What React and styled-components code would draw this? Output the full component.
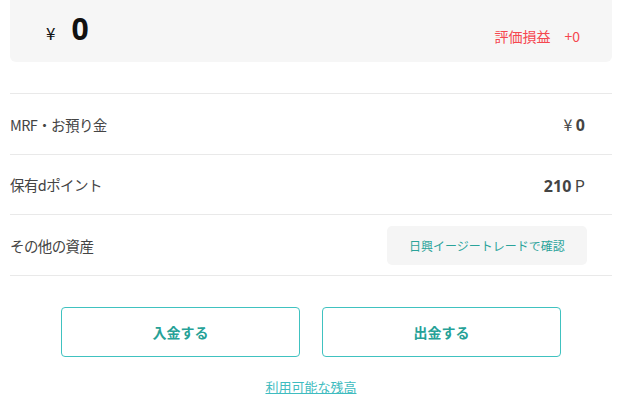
import React from 'react';
import styled, { createGlobalStyle } from 'styled-components';

const GlobalStyle = createGlobalStyle`
    body {
        margin: 0;
        background: #ffffff;
        font-family: "Noto Sans CJK JP", "Noto Sans", "Liberation Sans", sans-serif;
        color: #444444;
    }
`

const Page = styled.div`
    width: 602px;
    margin-left: 10px;
`

const Summary = styled.div`
    display: flex;
    justify-content: space-between;
    align-items: flex-start;
    height: 62px;
    padding: 0 32px 0 36px;
    box-sizing: border-box;
    background: #f6f6f6;
    border-radius: 0 0 6px 6px;
`

const Total = styled.div`
    display: flex;
    align-items: baseline;
    gap: 16px;
    margin-top: 8px;
    color: #111111;
    span {
        font-size: 17px;
    }
    strong {
        font-size: 30px;
        font-weight: 700;
        font-family: "Open Sans", "Noto Sans", sans-serif;
    }
`

const Profit = styled.div`
    display: flex;
    gap: 14px;
    margin-top: 26px;
    font-size: 14px;
    color: #f5474f;
`

const List = styled.div`
    margin-top: 31px;
    border-bottom: 1px solid #e9e9e9;
`

const Row = styled.div`
    display: flex;
    justify-content: space-between;
    align-items: center;
    height: ${props => props.$h || 60}px;
    padding-right: ${props => props.$pr || 27}px;
    border-top: 1px solid #e9e9e9;
    font-size: 14.5px;
    letter-spacing: -0.6px;
    color: #444444;
`

const Value = styled.div`
    font-size: 16px;
    letter-spacing: 0;
    color: #444444;
    b {
        font-weight: 700;
        font-family: "Open Sans", "Noto Sans", sans-serif;
    }
`

const CheckButton = styled.button`
    width: 200px;
    height: 39px;
    border: none;
    border-radius: 5px;
    background: #f5f5f5;
    color: #2aa39a;
    font-family: inherit;
    font-size: 12px;
    letter-spacing: 0;
`

const Actions = styled.div`
    display: flex;
    justify-content: center;
    gap: 22px;
    margin-top: 31px;
`

const ActionButton = styled.button`
    width: 239px;
    height: 50px;
    box-sizing: border-box;
    border: 1px solid #40c2c0;
    border-radius: 4px;
    background: #ffffff;
    color: #26a197;
    font-family: inherit;
    font-size: 14px;
    font-weight: 700;
`

const Balance = styled.a`
    display: block;
    width: fit-content;
    margin: 20px auto 0;
    font-size: 13px;
    color: #3fbcc0;
    text-decoration: underline;
`

export default function App () {
    return (
        <Page>
            <GlobalStyle/>
            <Summary>
                <Total>
                    <span>¥</span>
                    <strong>0</strong>
                </Total>
                <Profit>
                    <span>評価損益</span>
                    <span>+0</span>
                </Profit>
            </Summary>
            <List>
                <Row>
                    <span>MRF・お預り金</span>
                    <Value>¥ <b>0</b></Value>
                </Row>
                <Row $h={59}>
                    <span>保有dポイント</span>
                    <Value><b>210</b> P</Value>
                </Row>
                <Row $pr={25}>
                    <span>その他の資産</span>
                    <CheckButton>日興イージートレードで確認</CheckButton>
                </Row>
            </List>
            <Actions>
                <ActionButton>入金する</ActionButton>
                <ActionButton>出金する</ActionButton>
            </Actions>
            <Balance>利用可能な残高</Balance>
        </Page>
    )
}
